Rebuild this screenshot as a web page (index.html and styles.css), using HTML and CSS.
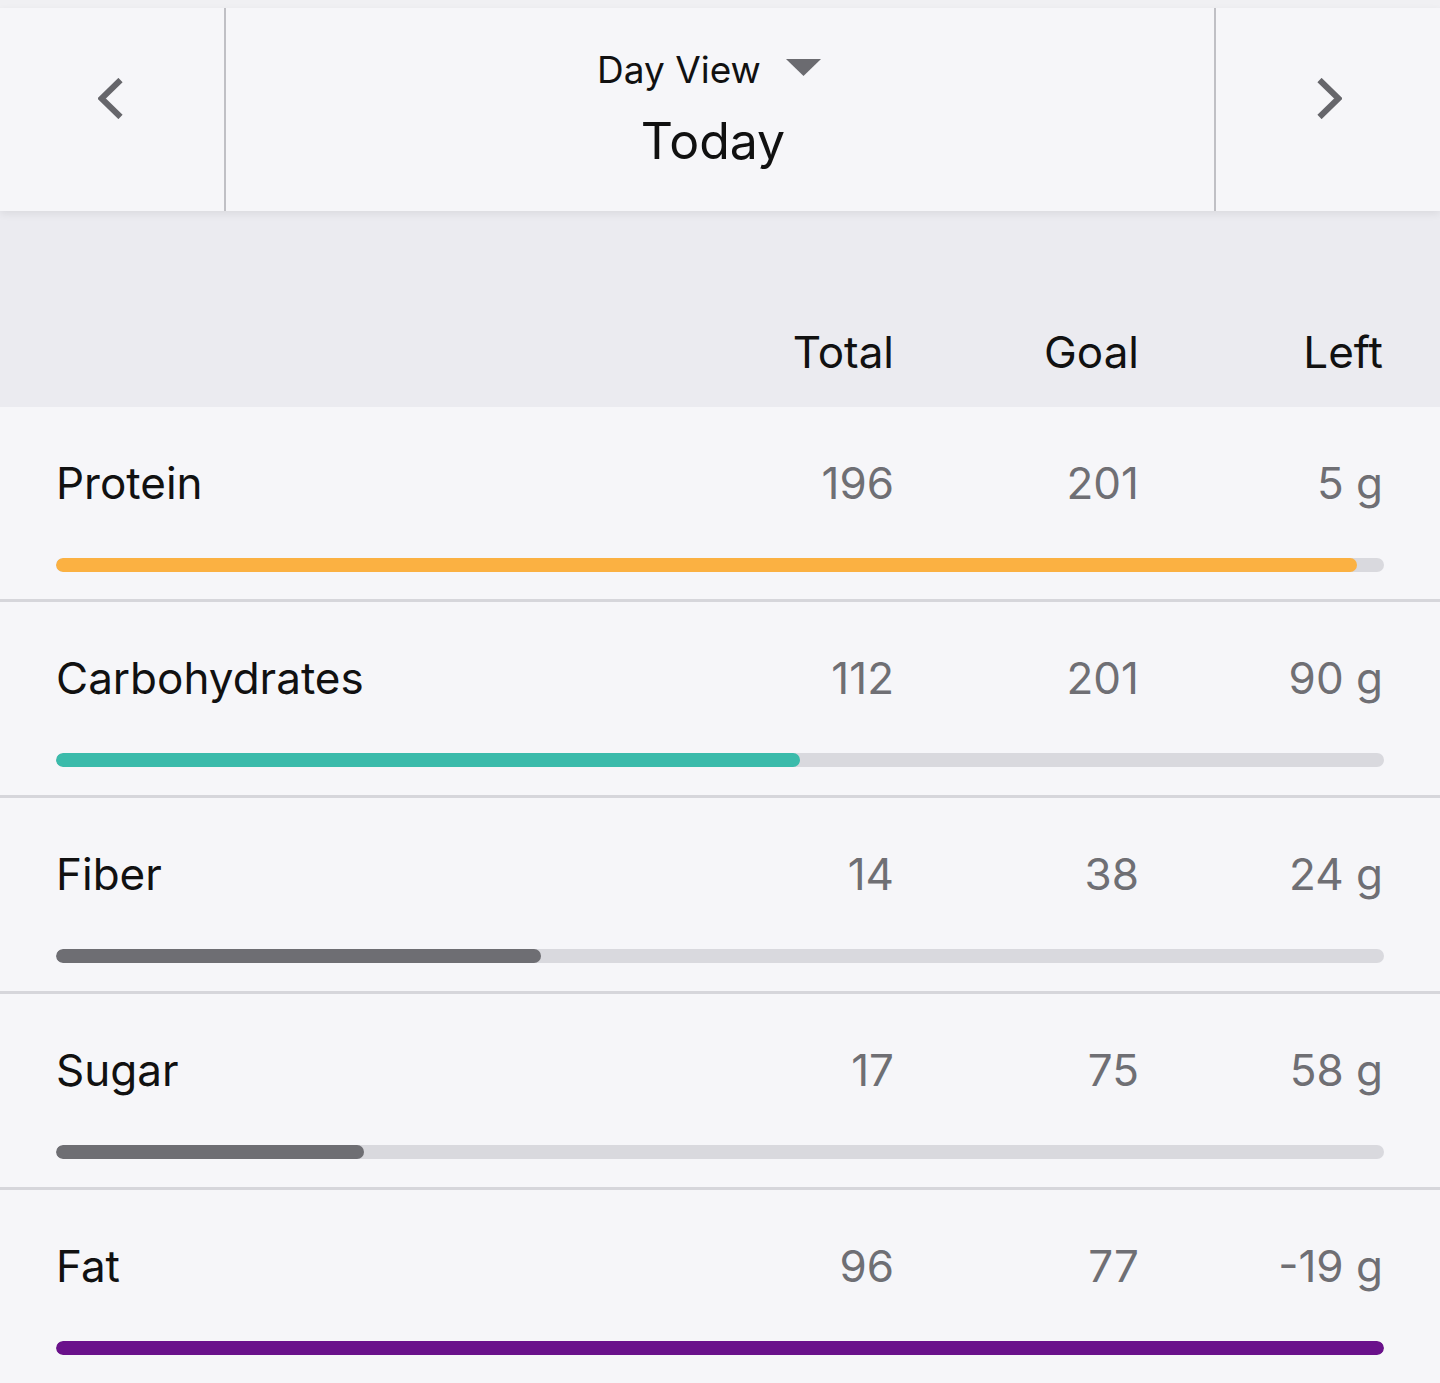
FILE: index.html
```html
<!DOCTYPE html>
<html lang="en">
<head>
<meta charset="utf-8">
<title>Day View</title>
<link rel="stylesheet" href="styles.css">
</head>
<body>
<div class="topstrip"></div>
<header class="nav">
  <div class="nav-side nav-left">
    <svg class="chev" width="25" height="41" viewBox="0 0 25 41"><polyline points="22.5,2 3.5,20.5 22.5,39" fill="none" stroke="#66666b" stroke-width="6"/></svg>
  </div>
  <div class="nav-mid">
    <div class="view-select"><span>Day View</span><svg class="caret" width="35" height="17" viewBox="0 0 35 17"><polygon points="0,0 35,0 17.5,17" fill="#6b6b70"/></svg></div>
    <div class="today">Today</div>
  </div>
  <div class="nav-side nav-right">
    <svg class="chev" width="25" height="41" viewBox="0 0 25 41"><polyline points="2.5,2 21.5,20.5 2.5,39" fill="none" stroke="#66666b" stroke-width="6"/></svg>
  </div>
</header>
<section class="colhead">
  <div></div>
  <div class="num">Total</div>
  <div class="num">Goal</div>
  <div class="num">Left</div>
</section>
<main class="rows">
  <div class="row">
    <div class="line"><div class="label">Protein</div><div class="val">196</div><div class="val">201</div><div class="val">5 g</div></div>
    <div class="track"><div class="fill fill-protein" style="width:98%"></div></div>
  </div>
  <div class="row">
    <div class="line"><div class="label">Carbohydrates</div><div class="val">112</div><div class="val">201</div><div class="val">90 g</div></div>
    <div class="track"><div class="fill fill-carb" style="width:56%"></div></div>
  </div>
  <div class="row">
    <div class="line"><div class="label">Fiber</div><div class="val">14</div><div class="val">38</div><div class="val">24 g</div></div>
    <div class="track"><div class="fill fill-gray" style="width:36.5%"></div></div>
  </div>
  <div class="row">
    <div class="line"><div class="label">Sugar</div><div class="val">17</div><div class="val">75</div><div class="val">58 g</div></div>
    <div class="track"><div class="fill fill-gray" style="width:23.2%"></div></div>
  </div>
  <div class="row">
    <div class="line"><div class="label">Fat</div><div class="val">96</div><div class="val">77</div><div class="val">-19 g</div></div>
    <div class="track"><div class="fill fill-fat" style="width:100%"></div></div>
  </div>
</main>
</body>
</html>
```
FILE: styles.css
```css
* { box-sizing: border-box; }
html, body { margin: 0; padding: 0; }
body {
  background: #f6f6f9;
  font-family: Inter, "Noto Sans", sans-serif;
  color: #111;
  overflow: hidden;
}
.topstrip { height: 8px; background: #f0f0f3; }
.nav {
  display: grid;
  grid-template-columns: 224px 1fr 224px;
  height: 203px;
  background: #f6f6f9;
  position: relative;
  z-index: 1;
  box-shadow: 0 3px 8px rgba(0,0,0,0.07);
}
.nav-side { padding-top: 70px; }
.nav-left { padding-left: 98px; }
.nav-right { padding-left: 101px; }
.chev { display: block; }
.nav-mid {
  border-left: 2px solid #c0c0c5;
  border-right: 2px solid #c0c0c5;
  display: flex;
  flex-direction: column;
  align-items: center;
  padding-top: 36px;
}
.view-select {
  display: flex;
  align-items: center;
  gap: 25px;
  font-size: 37px;
  line-height: 52px;
  margin-left: -22px;
}
.caret { display: block; margin-top: -6px; }
.today {
  font-size: 50px;
  line-height: 60px;
  margin-top: 15px;
  margin-left: -14px;
}
.colhead {
  display: grid;
  grid-template-columns: 1fr 245px 245px 244px;
  padding: 114px 57px 28px 57px;
  background: #ebebf0;
  font-size: 44px;
  line-height: 54px;
}
.num { text-align: right; }
.row {
  border-bottom: 3px solid #d6d6db;
  padding: 49px 56px 28px 56px;
}
.row:first-child { padding-bottom: 27px; }
.line {
  display: grid;
  grid-template-columns: 1fr 245px 245px 244px;
  font-size: 44px;
  line-height: 54px;
  padding: 0 1px 0 0;
}
.label { color: #111; }
.val { text-align: right; color: #6f6f74; }
.track {
  margin-top: 48px;
  height: 14px;
  border-radius: 7px;
  background: #d9d9de;
  overflow: hidden;
}
.fill { height: 100%; border-radius: 7px; }
.fill-protein { background: #fbb142; }
.fill-carb { background: #3bbbab; }
.fill-gray { background: #6e6e73; }
.fill-fat { background: #6a118b; }
```
